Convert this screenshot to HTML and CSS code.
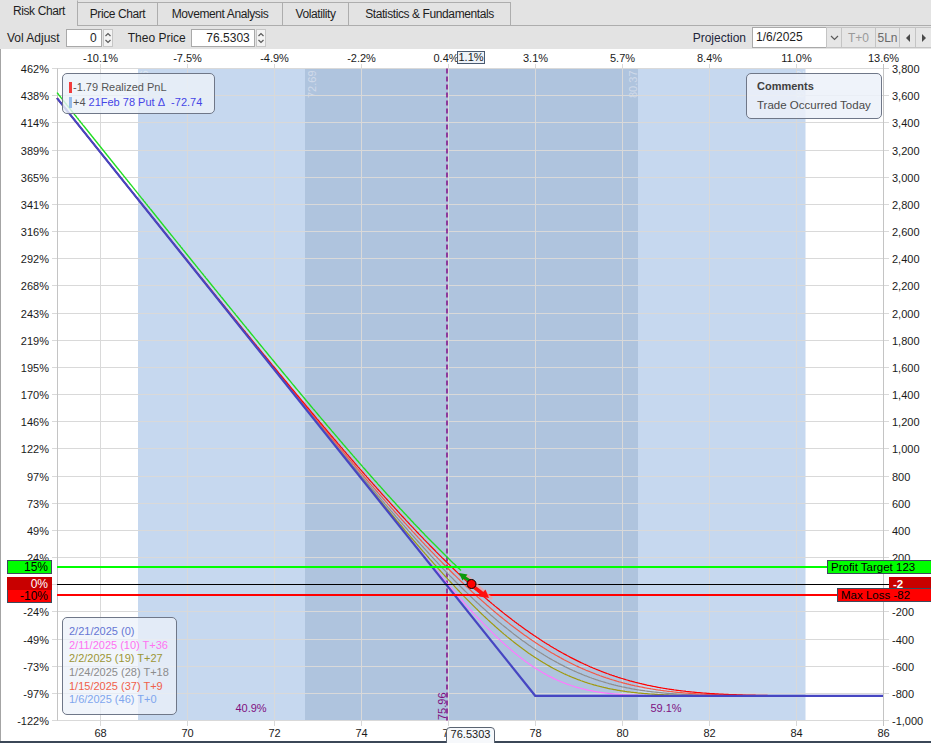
FILE: index.html
```html
<!DOCTYPE html>
<html>
<head>
<meta charset="utf-8">
<title>Risk Chart</title>
<link rel="stylesheet" href="styles.css">
</head>
<body>
<div class="app">
  <div class="tabbar">
    <div class="tab active w1">Risk Chart</div>
    <div class="tab w2">Price Chart</div>
    <div class="tab w3">Movement Analysis</div>
    <div class="tab w4">Volatility</div>
    <div class="tab w5">Statistics &amp; Fundamentals</div>
    <div class="tabfill"></div>
  </div>

  <div class="toolbar">
    <span class="lbl lbl-vol">Vol Adjust</span>
    <span class="num num-vol">0</span>
    <span class="spin"><svg width="8" height="16" viewBox="0 0 8 16"><path class="chev" d="M1.5 6 L4 3.5 L6.5 6"/><path class="chev" d="M1.5 10 L4 12.5 L6.5 10"/></svg></span>
    <span class="lbl lbl-theo">Theo Price</span>
    <span class="num num-theo">76.5303</span>
    <span class="spin"><svg width="8" height="16" viewBox="0 0 8 16"><path class="chev" d="M1.5 6 L4 3.5 L6.5 6"/><path class="chev" d="M1.5 10 L4 12.5 L6.5 10"/></svg></span>
    <span class="lbl lbl-proj">Projection</span>
    <span class="date">1/6/2025</span>
    <span class="dd"><svg width="9" height="6" viewBox="0 0 9 6"><path class="chev" d="M1 1 L4.5 4.5 L8 1"/></svg></span>
    <span class="btn btn-t0">T+0</span>
    <span class="btn btn-5ln">5Ln</span>
    <span class="btn btn-arr"><svg width="6" height="8" viewBox="0 0 6 8"><path class="tri" d="M5 0 L1 4 L5 8 Z"/></svg></span>
    <span class="btn btn-arr btn-last"><svg width="6" height="8" viewBox="0 0 6 8"><path class="tri" d="M1 0 L5 4 L1 8 Z"/></svg></span>
  </div>

  <div class="chart">
    <svg class="plot" width="931" height="694" viewBox="0 49 931 694">
      <!-- probability bands -->
      <rect class="band-l" x="138" y="68.5" width="667.5" height="652"/>
      <rect class="band-d" x="305" y="68.5" width="333" height="652"/>
      <text class="bandlbl-l" transform="translate(148 98) rotate(-90)">68.86</text>
      <text class="bandlbl-l" transform="translate(804 98) rotate(-90)">84.22</text>
      <text class="bandlbl-d" transform="translate(316 98) rotate(-90)">72.69</text>
      <text class="bandlbl-d" transform="translate(637 98) rotate(-90)">80.37</text>

      <!-- horizontal grid (with ticks) -->
      <g class="gl">
        <line x1="52" x2="889" y1="68.5" y2="68.5"/>
        <line x1="52" x2="889" y1="95.5" y2="95.5"/>
        <line x1="52" x2="889" y1="122.5" y2="122.5"/>
        <line x1="52" x2="889" y1="150.5" y2="150.5"/>
        <line x1="52" x2="889" y1="177.5" y2="177.5"/>
        <line x1="52" x2="889" y1="204.5" y2="204.5"/>
        <line x1="52" x2="889" y1="231.5" y2="231.5"/>
        <line x1="52" x2="889" y1="258.5" y2="258.5"/>
        <line x1="52" x2="889" y1="285.5" y2="285.5"/>
        <line x1="52" x2="889" y1="313.5" y2="313.5"/>
        <line x1="52" x2="889" y1="340.5" y2="340.5"/>
        <line x1="52" x2="889" y1="367.5" y2="367.5"/>
        <line x1="52" x2="889" y1="394.5" y2="394.5"/>
        <line x1="52" x2="889" y1="421.5" y2="421.5"/>
        <line x1="52" x2="889" y1="448.5" y2="448.5"/>
        <line x1="52" x2="889" y1="476.5" y2="476.5"/>
        <line x1="52" x2="889" y1="503.5" y2="503.5"/>
        <line x1="52" x2="889" y1="530.5" y2="530.5"/>
        <line x1="52" x2="889" y1="557.5" y2="557.5"/>
        <line x1="52" x2="889" y1="584.5" y2="584.5"/>
        <line x1="52" x2="889" y1="611.5" y2="611.5"/>
        <line x1="52" x2="889" y1="639.5" y2="639.5"/>
        <line x1="52" x2="889" y1="666.5" y2="666.5"/>
        <line x1="52" x2="889" y1="693.5" y2="693.5"/>
        <line x1="52" x2="889" y1="720.5" y2="720.5"/>
      </g>
      <!-- vertical grid (with ticks) -->
      <g class="gl">
        <line x1="100.5" x2="100.5" y1="64" y2="726"/>
        <line x1="187.5" x2="187.5" y1="64" y2="726"/>
        <line x1="274.5" x2="274.5" y1="64" y2="726"/>
        <line x1="361.5" x2="361.5" y1="64" y2="726"/>
        <line x1="448.5" x2="448.5" y1="64" y2="726"/>
        <line x1="535.5" x2="535.5" y1="64" y2="726"/>
        <line x1="622.5" x2="622.5" y1="64" y2="726"/>
        <line x1="709.5" x2="709.5" y1="64" y2="726"/>
        <line x1="796.5" x2="796.5" y1="64" y2="726"/>
      </g>
      <g class="axisline">
        <line x1="57.5" x2="57.5" y1="68.5" y2="720.5"/>
        <line x1="883.5" x2="883.5" y1="64" y2="726"/>
      </g>

      <!-- left axis: percent -->
      <g class="ax ax-left">
        <text x="49" y="72.5">462%</text>
        <text x="49" y="99.5">438%</text>
        <text x="49" y="126.5">414%</text>
        <text x="49" y="154.5">389%</text>
        <text x="49" y="181.5">365%</text>
        <text x="49" y="208.5">341%</text>
        <text x="49" y="235.5">316%</text>
        <text x="49" y="262.5">292%</text>
        <text x="49" y="289.5">268%</text>
        <text x="49" y="317.5">243%</text>
        <text x="49" y="344.5">219%</text>
        <text x="49" y="371.5">195%</text>
        <text x="49" y="398.5">170%</text>
        <text x="49" y="425.5">146%</text>
        <text x="49" y="452.5">122%</text>
        <text x="49" y="480.5">97%</text>
        <text x="49" y="507.5">73%</text>
        <text x="49" y="534.5">49%</text>
        <text x="49" y="561.5">24%</text>
        <text x="49" y="615.5">-24%</text>
        <text x="49" y="643.5">-49%</text>
        <text x="49" y="670.5">-73%</text>
        <text x="49" y="697.5">-97%</text>
        <text x="49" y="724.5">-122%</text>
      </g>
      <!-- right axis: dollars -->
      <g class="ax ax-right">
        <text x="892" y="72.5">3,800</text>
        <text x="892" y="99.5">3,600</text>
        <text x="892" y="126.5">3,400</text>
        <text x="892" y="154.5">3,200</text>
        <text x="892" y="181.5">3,000</text>
        <text x="892" y="208.5">2,800</text>
        <text x="892" y="235.5">2,600</text>
        <text x="892" y="262.5">2,400</text>
        <text x="892" y="289.5">2,200</text>
        <text x="892" y="317.5">2,000</text>
        <text x="892" y="344.5">1,800</text>
        <text x="892" y="371.5">1,600</text>
        <text x="892" y="398.5">1,400</text>
        <text x="892" y="425.5">1,200</text>
        <text x="892" y="452.5">1,000</text>
        <text x="892" y="480.5">800</text>
        <text x="892" y="507.5">600</text>
        <text x="892" y="534.5">400</text>
        <text x="892" y="561.5">200</text>
        <text x="892" y="615.5">-200</text>
        <text x="892" y="643.5">-400</text>
        <text x="892" y="670.5">-600</text>
        <text x="892" y="697.5">-800</text>
        <text x="892" y="724.5">-1,000</text>
      </g>
      <!-- top axis: % move -->
      <g class="ax ax-mid">
        <text x="100.5" y="62">-10.1%</text>
        <text x="187.5" y="62">-7.5%</text>
        <text x="274.5" y="62">-4.9%</text>
        <text x="361.5" y="62">-2.2%</text>
        <text x="446" y="62">0.4%</text>
        <text x="535.5" y="62">3.1%</text>
        <text x="622.5" y="62">5.7%</text>
        <text x="709.5" y="62">8.4%</text>
        <text x="796.5" y="62">11.0%</text>
        <text x="883.5" y="62">13.6%</text>
      </g>
      <!-- bottom axis: price -->
      <g class="ax ax-mid">
        <text x="100.5" y="737">68</text>
        <text x="187.5" y="737">70</text>
        <text x="274.5" y="737">72</text>
        <text x="361.5" y="737">74</text>
        <text x="448.5" y="737">76</text>
        <text x="535.5" y="737">78</text>
        <text x="622.5" y="737">80</text>
        <text x="709.5" y="737">82</text>
        <text x="796.5" y="737">84</text>
        <text x="883.5" y="737">86</text>
      </g>

      <!-- breakeven dashed line -->
      <line class="be" x1="447" x2="447" y1="68.5" y2="720.5"/>

      <!-- P&L curves -->
      <path id="c10" class="crv crv-36" d=""/>
      <path id="c19" class="crv crv-27" d=""/>
      <path id="c28" class="crv crv-18" d=""/>
      <path id="c37" class="crv crv-9" d=""/>
      <path id="c46" class="crv crv-0" d=""/>
      <path id="cg" class="crv crv-g" d=""/>
      <path class="crv crv-exp" d="M57 98.1 L535.2 695.8 L883 695.8"/>

      <!-- target / zero / loss lines -->
      <line class="hl-pt" x1="57" x2="931" y1="567" y2="567"/>
      <line class="hl-zero" x1="57" x2="889" y1="584.5" y2="584.5"/>
      <line class="hl-ml" x1="57" x2="931" y1="595" y2="595"/>

      <!-- position markers -->
      <line class="mk-trail" x1="466" y1="575" x2="492" y2="599"/>
      <line class="mk-red-shaft" x1="474" y1="587" x2="483" y2="594"/>
      <path class="mk-red-head" d="M489 598 L479 596.5 L485.5 589.5 Z"/>
      <line class="mk-green-shaft" x1="470" y1="581" x2="464" y2="577"/>
      <path class="mk-green-head" d="M459 573 L467.5 574.5 L462.5 580.5 Z"/>
      <circle class="mk-dot" cx="471.5" cy="584" r="4.5"/>

      <!-- probability + breakeven labels -->
      <text class="purple mid" x="251" y="712">40.9%</text>
      <text class="purple mid" x="666" y="712">59.1%</text>
      <text class="purple" transform="translate(446 720) rotate(-90)">75.96</text>

      <!-- frame -->
      <line class="frame-left" x1="0.5" x2="0.5" y1="49" y2="743"/>
      <rect class="frame-bottom" x="0" y="741" width="931" height="2"/>
    </svg>

    <div class="legend-top">
      <div class="lt-row"><span class="swatch sw-red"></span>-1.79 Realized PnL</div>
      <div class="lt-row"><span class="swatch sw-blue"></span>+4 <span class="lt-blue">21Feb 78 Put Δ&nbsp;&nbsp;-72.74</span></div>
    </div>

    <div class="comments">
      <div class="cm-title">Comments</div>
      <div class="cm-text">Trade Occurred Today</div>
    </div>

    <div class="legend-bottom">
      <div class="lb-row lb-exp">2/21/2025 (0)</div>
      <div class="lb-row lb-36">2/11/2025 (10) T+36</div>
      <div class="lb-row lb-27">2/2/2025 (19) T+27</div>
      <div class="lb-row lb-18">1/24/2025 (28) T+18</div>
      <div class="lb-row lb-9">1/15/2025 (37) T+9</div>
      <div class="lb-row lb-0">1/6/2025 (46) T+0</div>
    </div>

    <div class="tag tag-15">15%</div>
    <div class="tag tag-0">0%</div>
    <div class="tag tag-m10">-10%</div>
    <div class="tag tag-pt">Profit Target 123</div>
    <div class="tag tag-m2">-2</div>
    <div class="tag tag-ml">Max Loss -82</div>

    <div class="pctbox">1.1%</div>
    <div class="pricebox">76.5303</div>
  </div>
</div>
<script src="script.js"></script>
</body>
</html>
```

FILE: styles.css
```css
html, body {
  margin: 0;
  padding: 0;
}
body {
  width: 931px;
  height: 743px;
  overflow: hidden;
  background: #e3e3e3;
  font-family: "Liberation Sans", Arial, sans-serif;
  color: #1e1e1e;
}
.app {
  width: 931px;
  height: 743px;
  display: flex;
  flex-direction: column;
}

/* ---------- tabs ---------- */
.tabbar {
  flex: none;
  height: 26px;
  display: flex;
  align-items: flex-end;
}
.tab {
  box-sizing: border-box;
  height: 24px;
  margin-left: -1px;
  border: 1px solid #adadad;
  background: #e3e3e3;
  font-size: 12px;
  letter-spacing: -0.4px;
  line-height: 22px;
  text-align: center;
  color: #1e1e1e;
  white-space: nowrap;
}
.tab.active {
  height: 26px;
  margin-left: 0;
  border-left-color: #e3e3e3;
  border-top-color: #e3e3e3;
  border-bottom: none;
  line-height: 21px;
  position: relative;
  z-index: 1;
}
.w1 { width: 78px; }
.w2 { width: 81px; }
.w3 { width: 126px; }
.w4 { width: 67px; }
.w5 { width: 163px; }
.tabfill {
  flex: 1;
  box-sizing: border-box;
  height: 1px;
  margin-left: -1px;
  border-bottom: 1px solid #adadad;
}

/* ---------- toolbar ---------- */
.toolbar {
  flex: none;
  height: 23px;
  display: flex;
  align-items: center;
  font-size: 12px;
}
.lbl {
  white-space: nowrap;
  color: #1e1e1e;
}
.lbl-vol { margin-left: 7px; }
.lbl-theo { margin-left: 15px; }
.lbl-proj { margin-left: auto; color: #22253a; }
.num {
  box-sizing: border-box;
  height: 18px;
  border: 1px solid #a9a9a9;
  background: #fff;
  text-align: right;
  line-height: 16px;
  padding-right: 4px;
  font-size: 12px;
  color: #1e1e1e;
}
.num-vol { width: 36px; margin-left: 6px; }
.num-theo { width: 64px; margin-left: 5px; }
.spin {
  box-sizing: border-box;
  width: 10px;
  height: 18px;
  margin-left: 1px;
  border: 1px solid #c6c6c6;
  background: #f3f3f3;
  display: flex;
  align-items: center;
  justify-content: center;
}
.chev {
  fill: none;
  stroke: #5a5a5a;
  stroke-width: 1.2;
}
.tri { fill: #4a4a4a; }
.date {
  box-sizing: border-box;
  width: 75px;
  height: 21px;
  margin-left: 6px;
  border: 1px solid #a9a9a9;
  background: #fff;
  line-height: 19px;
  padding-left: 3px;
  font-size: 12px;
}
.dd, .btn {
  box-sizing: border-box;
  height: 21px;
  margin-left: -1px;
  border: 1px solid #c4c4c4;
  background: #e6e6e6;
  display: flex;
  align-items: center;
  justify-content: center;
  font-size: 12px;
}
.dd { width: 16px; }
.btn-t0 { width: 35px; color: #9a9a9a; }
.btn-5ln { width: 25px; color: #6a6a6a; }
.btn-arr { width: 17px; }
.btn-last { width: 16px; border-right: none; }

/* ---------- chart ---------- */
.chart {
  flex: none;
  position: relative;
  height: 694px;
  background: #fff;
}
.plot {
  display: block;
}
.band-l { fill: #c6d8ef; }
.band-d { fill: #afc4de; }
.bandlbl-l {
  font: 11px "Liberation Sans", Arial, sans-serif;
  fill: #dfe8f4;
}
.bandlbl-d {
  font: 11px "Liberation Sans", Arial, sans-serif;
  fill: #cfdaea;
}
.gl line {
  stroke: #d9d9d9;
  stroke-width: 1;
}
.axisline line {
  stroke: #c4c4c4;
  stroke-width: 1;
}
.ax {
  font: 11px "Liberation Sans", Arial, sans-serif;
  fill: #1a1a1a;
}
.ax-left { text-anchor: end; }
.ax-right { text-anchor: start; }
.ax-mid { text-anchor: middle; }

.be {
  stroke: #800080;
  stroke-width: 1.4;
  stroke-dasharray: 5 3;
}
.crv {
  fill: none;
  stroke-width: 1.2;
}
.crv-36 { stroke: #ff78ff; }
.crv-27 { stroke: #a09a10; }
.crv-18 { stroke: #8f8f8f; }
.crv-9 { stroke: #f25a48; }
.crv-0 { stroke: #ff0000; }
.crv-g { stroke: #22dd22; stroke-width: 1.4; }
.crv-exp { stroke: #4646c2; stroke-width: 2.2; }

.hl-pt { stroke: #00ff00; stroke-width: 2; }
.hl-zero { stroke: #000; stroke-width: 1; }
.hl-ml { stroke: #ff0000; stroke-width: 2; }

.mk-trail { stroke: #f3a0a0; stroke-width: 3; opacity: 0.7; }
.mk-red-shaft { stroke: #ff1010; stroke-width: 3.5; }
.mk-red-head { fill: #ff1010; }
.mk-green-shaft { stroke: #0a9a0a; stroke-width: 3; }
.mk-green-head { fill: #0a9a0a; }
.mk-dot { fill: #ff0000; stroke: #000; stroke-width: 1; }

.purple {
  font: 11px "Liberation Sans", Arial, sans-serif;
  fill: #80107f;
}
.mid { text-anchor: middle; }
.frame-left { stroke: #a4a4a4; stroke-width: 1; }
.frame-bottom { fill: #3b4757; }

/* ---------- overlays ---------- */
.legend-top {
  position: absolute;
  left: 62px;
  top: 24px;
  width: 153px;
  height: 41px;
  box-sizing: border-box;
  border: 1px solid #6f7788;
  border-radius: 5px;
  background: rgba(236, 241, 249, 0.82);
  padding: 6px 0 0 6px;
  font-size: 11px;
  color: #555;
}
.lt-row {
  height: 15px;
  line-height: 15px;
  white-space: nowrap;
  display: flex;
  align-items: center;
}
.swatch {
  display: inline-block;
  width: 3px;
  height: 11px;
  margin-right: 1px;
}
.sw-red { background: #f23c3c; }
.sw-blue { background: #96bbe9; }
.lt-blue { color: #4646e6; margin-left: 3px; }

.comments {
  position: absolute;
  left: 746px;
  top: 24px;
  width: 136px;
  height: 46px;
  box-sizing: border-box;
  border: 1px solid #6f7788;
  border-radius: 5px;
  background: rgba(236, 241, 249, 0.85);
  padding: 3px 0 0 10px;
  font-size: 11.5px;
  line-height: 19px;
  color: #4a4a4a;
}
.cm-title { font-weight: bold; color: #404040; font-size: 11px; }
.cm-text { white-space: nowrap; }

.legend-bottom {
  position: absolute;
  left: 62px;
  top: 568px;
  width: 115px;
  height: 98px;
  box-sizing: border-box;
  border: 1px solid #6f7788;
  border-radius: 5px;
  background: rgba(236, 241, 249, 0.75);
  padding: 7px 0 0 6px;
  font-size: 11px;
}
.lb-row {
  height: 13.7px;
  line-height: 13.7px;
  white-space: nowrap;
}
.lb-exp { color: #6576d4; }
.lb-36 { color: #ff72f2; }
.lb-27 { color: #9c9636; }
.lb-18 { color: #8c8c8c; }
.lb-9 { color: #f0604a; }
.lb-0 { color: #7fa6ee; }

.tag {
  position: absolute;
  box-sizing: border-box;
  font-size: 12px;
  line-height: 12px;
  white-space: nowrap;
  color: #000;
}
.tag-15 {
  left: 7px;
  top: 511px;
  width: 45px;
  height: 14px;
  background: #00ff00;
  border: 1px solid #3c4a5c;
  text-align: right;
  padding-right: 3px;
}
.tag-0 {
  left: 7px;
  top: 528px;
  width: 45px;
  height: 14px;
  background: #c80000;
  color: #fff;
  text-align: right;
  padding: 1px 4px 0 0;
}
.tag-m10 {
  left: 7px;
  top: 541px;
  width: 45px;
  height: 13px;
  background: #ff0000;
  border: 1px solid #3c4a5c;
  border-top: none;
  text-align: right;
  padding-right: 3px;
}
.tag-pt {
  left: 827px;
  top: 511px;
  width: 110px;
  height: 14px;
  background: #00ff00;
  border: 1px solid #3c4a5c;
  padding-left: 3px;
  font-size: 11.5px;
}
.tag-m2 {
  left: 889px;
  top: 528px;
  width: 45px;
  height: 13px;
  background: #c80000;
  color: #fff;
  font-weight: bold;
  font-size: 11.5px;
  padding: 1px 0 0 4px;
}
.tag-ml {
  left: 837px;
  top: 539px;
  width: 100px;
  height: 14px;
  background: #ff0000;
  border: 1px solid #3c4a5c;
  padding-left: 3px;
  font-size: 11.5px;
}
.pctbox {
  position: absolute;
  left: 457px;
  top: 2px;
  width: 28px;
  height: 13px;
  box-sizing: border-box;
  border: 1px solid #4a5a70;
  background: #edf2f8;
  font-size: 11px;
  line-height: 11px;
  text-align: center;
  color: #1a1a1a;
}
.pricebox {
  position: absolute;
  left: 446px;
  top: 678px;
  width: 49px;
  height: 18px;
  box-sizing: border-box;
  border: 1px solid #5a6472;
  border-radius: 4px 4px 0 0;
  background: #f6f8fb;
  font-size: 11px;
  line-height: 13px;
  text-align: center;
  color: #1a1a1a;
}
```

FILE: script.js
```javascript
(function () {
  var K = 78, QTY = 400, COST = 818, S0 = 76.53;

  function erf(x) {
    var s = x < 0 ? -1 : 1;
    x = Math.abs(x);
    var t = 1 / (1 + 0.3275911 * x);
    var y = 1 - (((((1.061405429 * t - 1.453152027) * t) + 1.421413741) * t - 0.284496736) * t + 0.254829592) * t * Math.exp(-x * x);
    return s * y;
  }
  function ncdf(x) { return 0.5 * (1 + erf(x / Math.SQRT2)); }
  function sig(S) { return Math.max(0.072, 0.105 - 0.004 * (S - S0)); }
  function put(S, T) {
    if (T <= 0) return Math.max(K - S, 0);
    var v = sig(S) * Math.sqrt(T);
    var d1 = (Math.log(S / K) + 0.5 * v * v) / v;
    var d2 = d1 - v;
    return K * ncdf(-d2) - S * ncdf(-d1);
  }
  function Y(p) { return 68.5 + (3800 - p) * 0.135833; }

  function build(days, x0, x1, off) {
    var d = '';
    for (var x = x0; x <= x1; x += 1) {
      var S = 67 + (x - 57) / 43.4737;
      var p = QTY * put(S, days / 365) - COST + (off || 0);
      d += (x === x0 ? 'M' : 'L') + x + ' ' + Y(p).toFixed(1) + ' ';
    }
    return d;
  }

  [46, 37, 28, 19, 10].forEach(function (dd) {
    var el = document.getElementById('c' + dd);
    if (el) el.setAttribute('d', build(dd, 57, 883));
  });
  var g = document.getElementById('cg');
  if (g) g.setAttribute('d', build(46, 57, 461, 40));
})();
```
